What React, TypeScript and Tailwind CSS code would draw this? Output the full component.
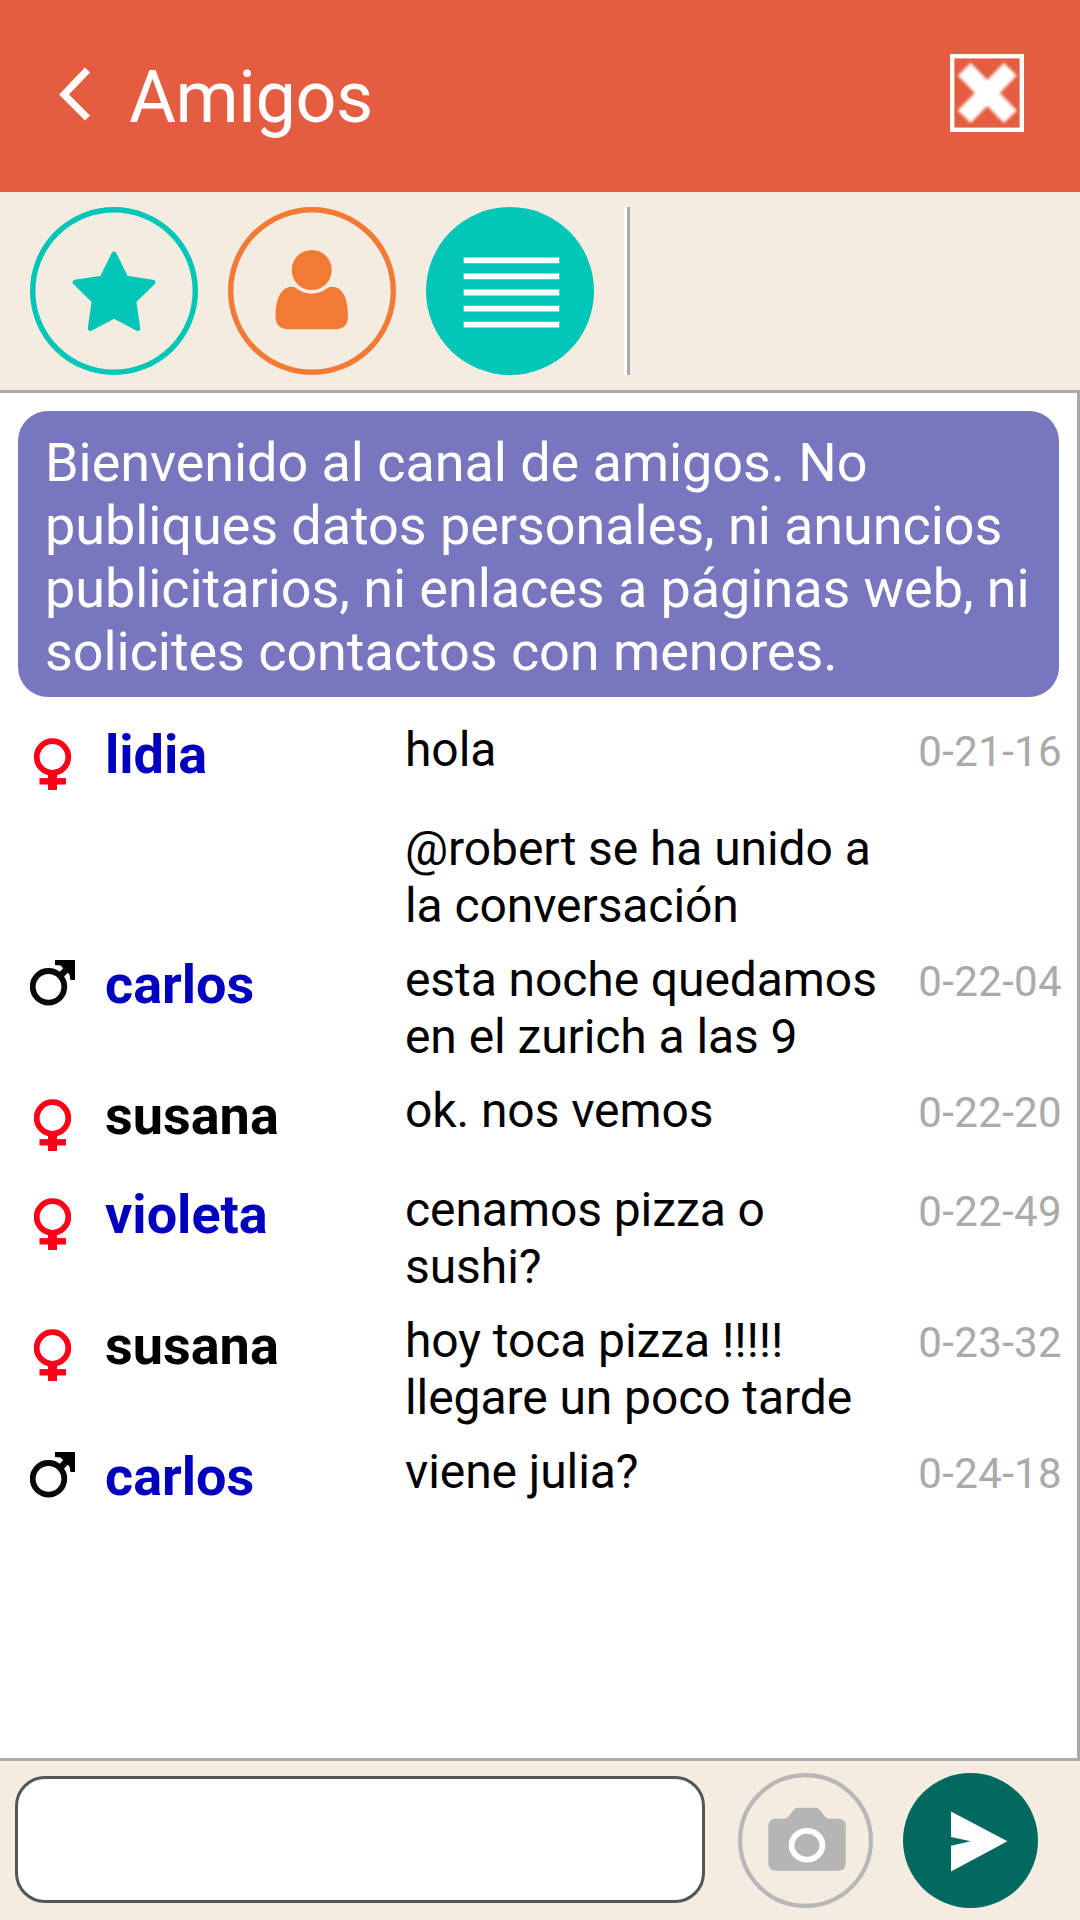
import React from "react";

type Gender = "f" | "m";

interface Message {
  gender?: Gender;
  name?: string;
  own?: boolean;
  lines: string[];
  time?: string;
}

const messages: Message[] = [
  { gender: "f", name: "lidia", lines: ["hola"], time: "0-21-16" },
  { lines: ["@robert se ha unido a", "la conversación"] },
  { gender: "m", name: "carlos", lines: ["esta noche quedamos", "en el zurich a las 9"], time: "0-22-04" },
  { gender: "f", name: "susana", own: true, lines: ["ok. nos vemos"], time: "0-22-20" },
  { gender: "f", name: "violeta", lines: ["cenamos pizza o", "sushi?"], time: "0-22-49" },
  { gender: "f", name: "susana", own: true, lines: ["hoy toca pizza !!!!!", "llegare un poco tarde"], time: "0-23-32" },
  { gender: "m", name: "carlos", lines: ["viene julia?"], time: "0-24-18" },
];

const welcome = [
  "Bienvenido al canal de amigos. No",
  "publiques datos personales, ni anuncios",
  "publicitarios, ni enlaces a páginas web, ni",
  "solicites contactos con menores.",
];

function FemaleIcon() {
  return (
    <svg className="ml-[34px] mt-[26px] h-[52px] w-[37px]" viewBox="0 0 37 52">
      <g className="blur-[0.7px]">
        <circle cx="18.5" cy="19" r="15.8" fill="none" stroke="#ff0018" strokeWidth="5.8" />
        <path d="M18.5 34V54" stroke="#ff0018" strokeWidth="9" />
        <path d="M5.5 43.3H32" stroke="#ff0018" strokeWidth="6.4" />
      </g>
    </svg>
  );
}

function MaleIcon() {
  return (
    <svg className="ml-[30px] mt-[18px] h-[47px] w-[45px]" viewBox="0 0 45 47">
      <g className="blur-[0.7px]">
        <circle cx="18.5" cy="26.8" r="15.8" fill="none" stroke="#080808" strokeWidth="5.8" />
        <path d="M29 17L38 8" stroke="#080808" strokeWidth="6.5" />
        <path d="M25 -2H47V20H40.500L39.500 14.500L30.500 5.500L25 5Z" fill="#000" />
      </g>
    </svg>
  );
}

function Row({ m }: { m: Message }) {
  return (
    <div className={m.lines.length > 1 ? "flex h-[131px] items-start" : "flex h-[99px] items-start"}>
      <div className="w-[105px] shrink-0">
        {m.gender === "f" && <FemaleIcon />}
        {m.gender === "m" && <MaleIcon />}
      </div>
      <div
        className={
          m.own
            ? "w-[300px] shrink-0 pt-[11px] text-[54px] font-bold leading-[63px] text-black"
            : "w-[300px] shrink-0 pt-[11px] text-[54px] font-bold leading-[63px] text-[#0000be]"
        }
      >
        {m.name}
      </div>
      <div className="grow whitespace-nowrap pt-[9px] text-[48px] leading-[57px] tracking-[-0.08px] text-black">
        {m.lines.map((l) => (
          <div key={l}>{l}</div>
        ))}
      </div>
      <div className="shrink-0 pr-[15px] pt-[15px] text-[42px] leading-[49px] tracking-[0.35px] text-[#aaaaaa]">
        {m.time}
      </div>
    </div>
  );
}

export default function App() {
  return (
    <div className="flex h-[1920px] w-[1080px] flex-col overflow-hidden bg-[#f4ebe1] font-['Roboto',sans-serif]">
      <header className="flex h-[192px] shrink-0 items-center bg-[#e55d40] pl-[58px] pr-14">
        <svg className="mb-[5px] h-[56px] w-[36px]" viewBox="0 0 36 56">
          <path d="M29.500 4L6 28.500L29.500 52" fill="none" stroke="#fff" strokeWidth="7" />
        </svg>
        <h1 className="ml-[35px] grow pt-[4px] text-[72px] leading-[84px] tracking-[-0.4px] text-white">Amigos</h1>
        <svg className="mb-[6px] h-[78px] w-[74px]" viewBox="0 0 74 78">
          <rect x="2.200" y="2.200" width="69.600" height="73.600" fill="none" stroke="#fff" strokeWidth="4.400" />
          <path
            className="blur-[1.4px]"
            d="M14.300 15.300L60.300 62.700M60.300 15.300L14.300 62.700"
            stroke="#fff"
            strokeWidth="18"
          />
        </svg>
      </header>

      <nav className="flex h-[198px] shrink-0 items-center gap-[30px] pl-[30px]">
        <svg className="size-[168px]" viewBox="0 0 168 168">
          <circle cx="84" cy="84" r="81.300" fill="none" stroke="#00c6b7" strokeWidth="5.400" />
          <path
            d="M84 47L96 71.300L123 75.200L103.800 94L107.800 121.500L84 109L60.200 121.500L64.200 94L45 75.200L72 71.300Z"
            fill="#00c6b7"
            stroke="#00c6b7"
            strokeWidth="5"
            strokeLinejoin="round"
          />
        </svg>
        <svg className="size-[168px]" viewBox="0 0 168 168">
          <circle cx="84" cy="84" r="81.300" fill="none" stroke="#f17b35" strokeWidth="5.400" />
          <circle cx="83.700" cy="63" r="20" fill="#f17b35" />
          <path
            d="M63 79.700Q66 79.500 68 81Q75 86.700 83.700 86.700Q92.500 86.700 99.500 81Q102 79.500 105 79.700C115 80.500 120 92 120 109Q120 122.200 107 122.200H60.500Q47.500 122.200 47.500 109C47.500 92 53 80.500 63 79.700Z"
            fill="#f17b35"
          />
        </svg>
        <svg className="size-[168px]" viewBox="0 0 168 168">
          <circle cx="84" cy="84" r="84" fill="#00c6b7" />
          <path d="M37.700 53.300H133.300M37.700 69.400H133.300M37.700 85.500H133.300M37.700 101.600H133.300M37.700 117.700H133.300" stroke="#fff" strokeWidth="5.800" />
        </svg>
        <div className="h-[168px] w-[6px] border-l-[3px] border-r-[3px] border-l-white border-r-[#aaaaaa]" />
      </nav>

      <main className="flex h-[1371px] shrink-0 flex-col border-y-[3px] border-r-[3px] border-[#aaaaaa] bg-white">
        <div className="ml-[18px] mr-[18px] mt-[18px] h-[286px] shrink-0 whitespace-nowrap rounded-[30px] bg-[#7876be] pl-[27px] pt-[20px] text-[54px] leading-[63px] tracking-[-0.07px] text-white">
          {welcome.map((l) => (
            <div key={l}>{l}</div>
          ))}
        </div>
        <div className="mt-[15px] flex flex-col">
          {messages.map((m, i) => (
            <Row key={i} m={m} />
          ))}
        </div>
      </main>

      <footer className="flex grow items-start pl-[15px] pt-3">
        <input
          type="text"
          aria-label="Mensaje"
          className="mt-[3px] h-[127px] w-[690px] rounded-[30px] border-[3px] border-[#555555] bg-white px-6 text-[48px] outline-none"
        />
        <svg className="ml-[33px] size-[135px]" viewBox="0 0 135 135">
          <circle cx="67.500" cy="67.500" r="65.400" fill="none" stroke="#b7b7b7" strokeWidth="4.200" />
          <path
            d="M37 45.700H46Q49.500 45.700 51 43L56 36.500Q57.500 34.700 60 34.700H77.500Q80 34.700 81.500 36.500L86.500 43Q88 45.700 91 45.700H101Q107.700 46.500 107.700 53V90.500Q107.700 97 101 97.700H37Q30.300 97 30.300 90.500V53Q30.300 46.500 37 45.700Z"
            fill="#b5b5b5"
          />
          <ellipse cx="69" cy="72.200" rx="15.400" ry="14.400" fill="none" stroke="#fff" strokeWidth="5.800" />
        </svg>
        <svg className="ml-[30px] size-[135px]" viewBox="0 0 135 135">
          <circle cx="67.500" cy="67.500" r="67.500" fill="#01695f" />
          <path d="M48 38.500L104.500 68.300L48 98.500V72.700L67.700 68.300L48 64Z" fill="#fff" />
        </svg>
      </footer>
    </div>
  );
}
